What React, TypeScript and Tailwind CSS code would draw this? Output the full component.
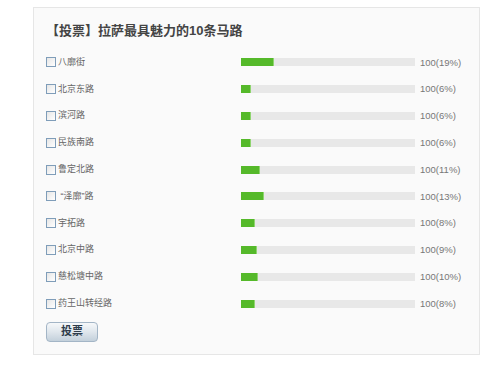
import React from "react";

const options = [
  { name: "八廓街", pct: 19 },
  { name: "北京东路", pct: 6 },
  { name: "滨河路", pct: 6 },
  { name: "民族南路", pct: 6 },
  { name: "鲁定北路", pct: 11 },
  { name: " “泽廓”路", pct: 13 },
  { name: "宇拓路", pct: 8 },
  { name: "北京中路", pct: 9 },
  { name: "慈松塘中路", pct: 10 },
  { name: "药王山转经路", pct: 8 },
];

const font = { fontFamily: '"Liberation Sans", "Noto Sans CJK SC", sans-serif' };

const Row = ({ name, pct }: { name: string; pct: number }) => (
  <div className="flex items-center h-[26.8px]">
    <div className="w-[195px] flex items-center">
      <span className="w-[10px] h-[10px] border border-[#7f9db9] bg-gradient-to-br from-[#e6e6e6] to-white shrink-0" />
      <span className="ml-[2px] text-[9px] leading-none text-[#666] whitespace-pre">{name}</span>
    </div>
    <div className="w-[174px] h-[8px] bg-[#e8e8e8]">
      <div className="h-full bg-[#55b92a] border-r border-[#8fd46f]" style={{ width: `${pct}%` }} />
    </div>
    <span className="ml-[5px] text-[9.5px] leading-none text-[#777]">100({pct}%)</span>
  </div>
);

const App = () => {
  return (
    <div className="w-[500px] h-[365px] bg-white overflow-hidden pt-[7px]" style={font}>
      <div className="ml-[33px] w-[447px] h-[348px] border border-[#e6e6e6] bg-[#fafafa] pl-[12px] pt-[13px]">
        <h3 className="text-[13px] leading-[20px] font-bold text-[#444]">【投票】拉萨最具魅力的10条马路</h3>
        <div className="mt-[8px]">
          {options.map((o) => (
            <Row key={o.name} name={o.name} pct={o.pct} />
          ))}
        </div>
        <button className="mt-[5px] w-[52px] h-[20px] rounded-[4px] border border-[#a3b5c6] bg-gradient-to-b from-[#f6f8fa] via-[#dfe6ec] to-[#c3d0db] text-[11px] font-bold text-[#2f3d4c] leading-none">
          投票
        </button>
      </div>
    </div>
  );
};

export default App;
